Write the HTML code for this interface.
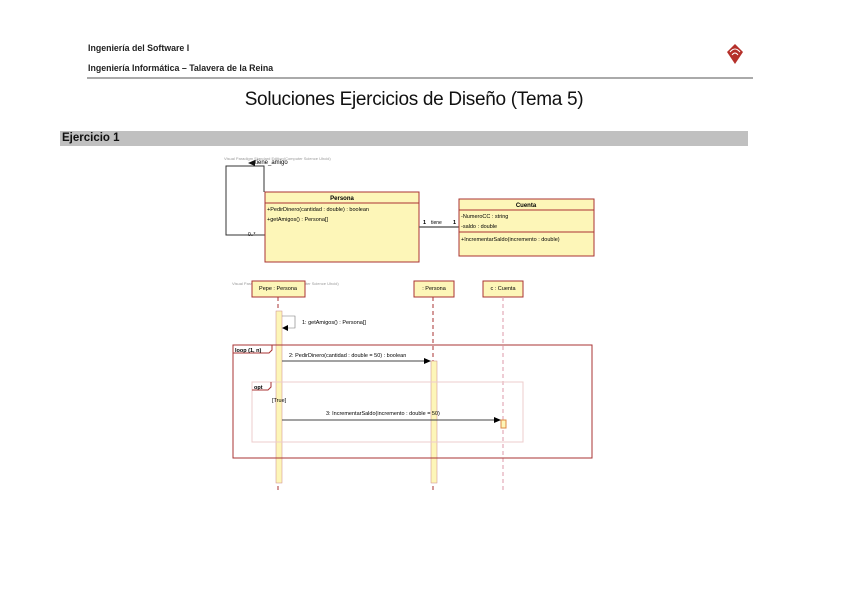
<!DOCTYPE html><html><head><meta charset="utf-8"><style>
body{margin:0;background:#fff;width:848px;height:599px;overflow:hidden;position:relative;font-family:"Liberation Sans",sans-serif}
.t{position:absolute;white-space:nowrap}
</style></head><body>
<div class="t" style="left:88px;top:43px;font-size:8.8px;font-weight:bold;color:#222">Ingeniería del Software I</div>
<div class="t" style="left:88px;top:63px;font-size:8.8px;font-weight:bold;color:#222">Ingeniería Informática – Talavera de la Reina</div>
<div style="position:absolute;left:87px;top:77px;width:666px;height:2px;background:#aaa"></div>
<div class="t" style="left:0;width:828px;text-align:center;top:89px;font-size:19px;letter-spacing:-0.3px;color:#111">Soluciones Ejercicios de Diseño (Tema 5)</div>
<div style="position:absolute;left:60px;top:131px;width:688px;height:15px;background:#c0c0c0"></div>
<div class="t" style="left:62px;top:132px;font-size:11.5px;font-weight:bold;color:#111">Ejercicio 1</div>
<svg width="848" height="599" style="position:absolute;left:0;top:0" font-family="Liberation Sans,sans-serif">
<g fill="#b5302a"><path d="M735 44 L743 52 L735 64 L727 52Z"/></g>
<path d="M730 52 q5-6 10 0 M732 55 q3-4 6 0" stroke="#fff" fill="none" stroke-width="1"/>
<text x="224" y="160" font-size="4" fill="#999">Visual Paradigm Standard Edition(Computer Science Uhcid)</text>
<path d="M264 192 V166 H226 V235 H265" fill="none" stroke="#333" stroke-width="1"/>
<path d="M248 163 L255 160 L255 166Z" fill="#111"/>
<text x="255" y="164" font-size="6">tiene_amigo</text>
<text x="248" y="236" font-size="5">0..*</text>
<rect x="265" y="192" width="154" height="70" fill="#fdf6b8" stroke="#a33" stroke-width="1"/>
<line x1="265" y1="203" x2="419" y2="203" stroke="#a33"/>
<text x="342" y="200" font-size="6" font-weight="bold" text-anchor="middle">Persona</text>
<text x="267" y="211" font-size="5.5">+PedirDinero(cantidad : double) : boolean</text>
<text x="267" y="221" font-size="5.5">+getAmigos() : Persona[]</text>
<line x1="419" y1="227" x2="459" y2="227" stroke="#666" stroke-width="1.5"/>
<text x="423" y="224" font-size="5.5" font-weight="bold">1</text><text x="431" y="224" font-size="5">tiene</text><text x="453" y="224" font-size="5.5" font-weight="bold">1</text>
<rect x="459" y="199" width="135" height="57" fill="#fdf6b8" stroke="#a33"/>
<line x1="459" y1="210" x2="594" y2="210" stroke="#a33"/><line x1="459" y1="232" x2="594" y2="232" stroke="#a33"/>
<text x="526" y="207" font-size="6" font-weight="bold" text-anchor="middle">Cuenta</text>
<text x="461" y="218" font-size="5.5">-NumeroCC : string</text>
<text x="461" y="228" font-size="5.5">-saldo : double</text>
<text x="461" y="241" font-size="5.5">+IncrementarSaldo(incremento : double)</text>
<text x="232" y="285" font-size="4" fill="#999">Visual Paradigm Standard Edition(Computer Science Uhcid)</text>
<g fill="#fdf6b8" stroke="#a33"><rect x="252" y="281" width="53" height="16"/><rect x="414" y="281" width="40" height="16"/><rect x="483" y="281" width="40" height="16"/></g>
<g font-size="5.5" text-anchor="middle"><text x="278" y="290">Pepe : Persona</text><text x="434" y="290">: Persona</text><text x="503" y="290">c : Cuenta</text></g>
<g stroke="#a33" stroke-dasharray="4,3"><line x1="278" y1="297" x2="278" y2="493"/><line x1="433" y1="297" x2="433" y2="493"/><line x1="503" y1="297" x2="503" y2="493" stroke="#d9a"/></g>
<rect x="276" y="311" width="6" height="172" fill="#fdf6b8" stroke="#c88" stroke-width=".5"/>
<rect x="431" y="361" width="6" height="122" fill="#fdf6b8" stroke="#c88" stroke-width=".5"/>
<rect x="501" y="420" width="5" height="8" fill="#fdf6b8" stroke="#d84"/>
<path d="M282 316 H295 V328 H285" fill="none" stroke="#777" stroke-width=".6"/><path d="M282 328 L288 325 L288 331Z"/>
<text x="302" y="324" font-size="5.5">1: getAmigos() : Persona[]</text>
<rect x="233" y="345" width="359" height="113" fill="none" stroke="#a33"/>
<path d="M233 353 H269 L272 350 V345" fill="none" stroke="#a33"/><text x="235" y="352" font-size="5.5" font-weight="bold">loop (1, n)</text>
<text x="289" y="357" font-size="5.5">2: PedirDinero(cantidad : double = 50) : boolean</text>
<line x1="282" y1="361" x2="428" y2="361" stroke="#444"/><path d="M431 361 L424 358 L424 364Z"/>
<rect x="252" y="382" width="271" height="60" fill="none" stroke="#ecc"/>
<path d="M252 390 H268 L271 387 V382" fill="none" stroke="#a33"/><text x="254" y="389" font-size="5.5" font-weight="bold">opt</text>
<text x="272" y="402" font-size="5.5">[True]</text>
<text x="326" y="415" font-size="5.5">3: IncrementarSaldo(incremento : double = 50)</text>
<line x1="282" y1="420" x2="497" y2="420" stroke="#444"/><path d="M501 420 L494 417 L494 423Z"/>
</svg>
</body></html>
